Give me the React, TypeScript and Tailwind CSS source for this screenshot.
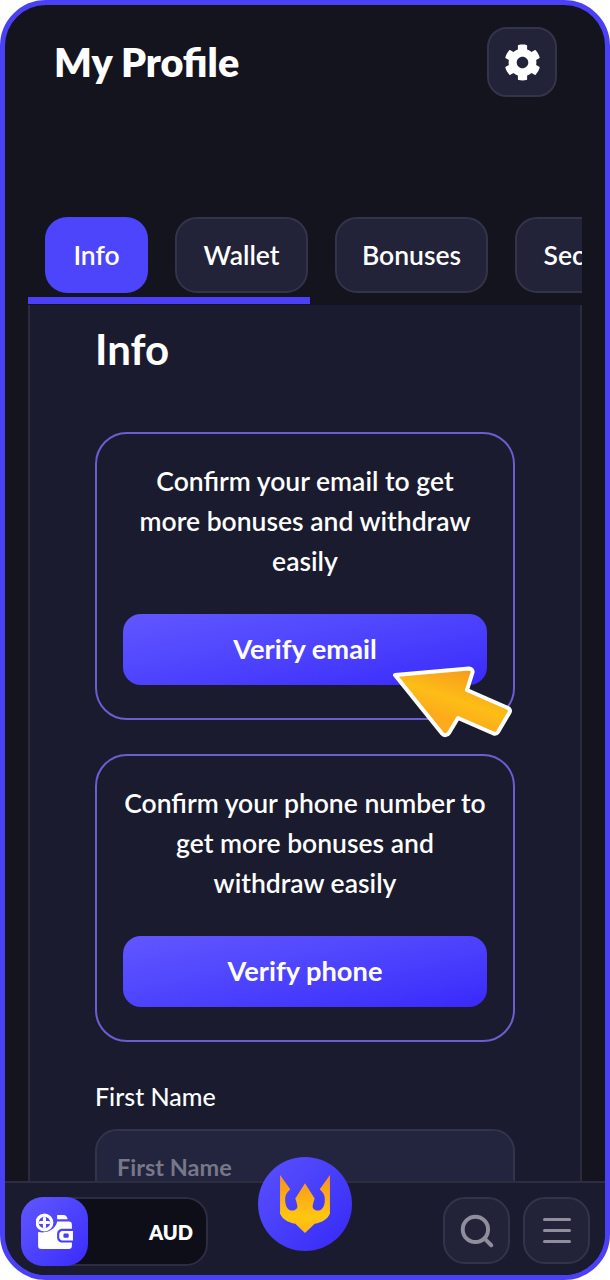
import React from "react";
import { Search } from "lucide-react";
import { FaCog } from "react-icons/fa";

const tabs = [
  { label: "Info", width: "w-[103px]", active: true },
  { label: "Wallet", width: "w-[133px]", active: false },
  { label: "Bonuses", width: "w-[153px]", active: false },
  { label: "Security", width: "w-[153px]", active: false },
];

function VerifyCard({ text, action }: { text: string[]; action: string }) {
  return (
    <div className="rounded-[32px] border-2 border-[#6a5fd0] px-[26px] pt-[27px] pb-[33px]">
      <p className="text-center text-[26.5px] leading-[40px] font-semibold text-white">
        {text.map((line) => (
          <span key={line} className="block whitespace-nowrap">
            {line}
          </span>
        ))}
      </p>
      <button className="mt-[33px] flex h-[71px] w-full items-center justify-center rounded-[18px] bg-gradient-to-br from-[#6256ff] to-[#3a28fb] text-[27.25px] font-bold text-white">
        {action}
      </button>
    </div>
  );
}

function WalletIcon() {
  return (
    <svg width="38" height="38" viewBox="0 0 36 36" fill="none">
      <path d="M20 2h6c2 0 3.500 1.500 4 4H20z" fill="#fff" />
      <path
        d="M20 8h11c2 0 3 1 3 3v4H25c-3 0-5 2-5 5v3c0 3 2 5 5 5h9v3c0 2-1 3-3 3H5c-2 0-3-1-3-3V18c6 1 10 0 14-3 2-2 3.500-4 4-7z"
        fill="#fff"
      />
      <path d="M25 17h10v9H25c-1.500 0-3-1.500-3-3v-3c0-1.500 1.500-3 3-3z" fill="#fff" />
      <rect x="26" y="19.500" width="5" height="4" rx="1" fill="#4a3cff" />
      <circle cx="8" cy="9" r="7" stroke="#fff" strokeWidth="3" fill="#4f42ff" />
      <path d="M8 5v8M4 9h8" stroke="#fff" strokeWidth="3" strokeLinecap="round" />
    </svg>
  );
}

function TridentLogo() {
  return (
    <svg width="50" height="58" viewBox="0 0 49 57">
      <defs>
        <linearGradient id="trident" x1="0.5" y1="0" x2="0.5" y2="1">
          <stop offset="0" stopColor="#fb8f1e" />
          <stop offset="0.72" stopColor="#fec710" />
          <stop offset="1" stopColor="#fdb515" />
        </linearGradient>
      </defs>
      <path
        d="M0 0L10 14C6 18 5 20 5 24C5 31 8 35 12 35C15 35 17 33 17 31C17 29 16 26 15 23L24.500 8L34 23C33 26 32 29 32 31C32 33 34 35 37 35C41 35 44 31 44 24C44 20 43 18 39 14L49 0V38C46 44 42 46 34 48L24.500 57L15 48C7 46 3 44 0 38Z"
        fill="url(#trident)"
      />
    </svg>
  );
}

function PointerArrow() {
  return (
    <svg width="134" height="82" viewBox="0 0 134 82" className="absolute top-[659px] left-[385px]">
      <defs>
        <linearGradient id="pointer" x1="0.75" y1="0" x2="0.35" y2="0.7">
          <stop offset="0" stopColor="#f7951d" />
          <stop offset="0.65" stopColor="#fdbd17" />
          <stop offset="1" stopColor="#fcab1a" />
        </linearGradient>
      </defs>
      <path
        d="M10 16L84 9.500c2.500 0 4 2 3.500 4L82 31l41 18c2 1 2.500 3 1.500 4.500L113 73c-1 1.500-3 2-4.500 1.500L73 59 64 74c-1.500 2.500-5 3-7 .5z"
        fill="url(#pointer)"
        stroke="#fff"
        strokeWidth="4"
        strokeLinejoin="round"
      />
    </svg>
  );
}

export default function App() {
  return (
    <div className="h-[1280px] w-[610px] overflow-hidden bg-white" style={{ fontFamily: "Lato, 'Noto Sans', sans-serif" }}>
      <div className="relative flex h-full flex-col overflow-hidden rounded-[46px] border-[5px] border-[#4c40f7] bg-[#14141f]">
        {/* Header */}
        <div className="flex shrink-0 items-start justify-between pt-[22px] pr-[48px] pl-[49px]">
          <h1 className="mt-[7px] text-[39.5px] leading-[56px] font-extrabold whitespace-nowrap text-white">My Profile</h1>
          <button className="flex h-[70px] w-[70px] items-center justify-center rounded-[20px] border-2 border-[#33344a] bg-[#222339] text-white">
            <FaCog size={37} />
          </button>
        </div>

        {/* Tabs */}
        <div className="mx-[23px] mt-[120px] w-[554px] shrink-0 overflow-hidden">
          <div className="flex gap-[27px] pl-[17px]">
            {tabs.map((tab) => (
              <div
                key={tab.label}
                className={
                  tab.active
                    ? "flex h-[76px] shrink-0 items-center justify-center rounded-[22px] bg-[#4c45fb] pt-[2px] text-[26.5px] font-semibold text-white " + tab.width
                    : "flex h-[76px] shrink-0 items-center justify-center rounded-[22px] border-2 border-[#33344a] bg-[#222339] pt-[2px] text-[26.5px] font-semibold text-white " + tab.width
                }
              >
                {tab.label}
              </div>
            ))}
          </div>
          <div className="mt-[4px] h-[7px] w-[282px] bg-[#4c40f7]" />
        </div>

        {/* Panel */}
        <main className="mx-[23px] mt-[1px] min-h-0 flex-1 overflow-hidden border-x-2 border-[#2a2b3e] bg-[#1a1b2e] pr-[65px] pl-[65px]">
          <h2 className="mt-[18px] text-[42px] leading-[52px] font-bold text-white">Info</h2>
          <div className="mt-[57px] flex flex-col gap-[34px]">
            <VerifyCard text={["Confirm your email to get", "more bonuses and withdraw", "easily"]} action="Verify email" />
            <VerifyCard text={["Confirm your phone number to", "get more bonuses and", "withdraw easily"]} action="Verify phone" />
          </div>
          <div className="mt-[38px] text-[25px] leading-[32px] font-medium text-white">First Name</div>
          <div className="mt-[17px] h-[80px] rounded-[22px] border-2 border-[#33344a] bg-[#23243d] px-[20px] pt-[20px] text-[23.5px] leading-[32px] font-bold text-[#77778a]">
            First Name
          </div>
        </main>

        {/* Bottom bar */}
        <footer className="flex h-[94px] shrink-0 items-start justify-between border-t-2 border-[#2c2d41] bg-[#1a1b2e] pt-[14px] pr-[15px] pl-[16px]">
          <div className="flex h-[69px] w-[187px] items-center justify-between rounded-[22px] border-2 border-[#2c2d41] bg-[#0e0e19] pr-[13px]">
            <div className="-ml-[2px] flex h-[69px] w-[67px] items-center justify-center rounded-[22px] bg-gradient-to-br from-[#6256ff] to-[#3a28fb]">
              <WalletIcon />
            </div>
            <span className="text-[20px] font-extrabold text-white">AUD</span>
          </div>
          <div className="flex gap-[13px]">
            <button className="flex h-[67px] w-[67px] items-center justify-center rounded-[22px] border-2 border-[#33344a] bg-[#222339] text-[#8e8e9c]">
              <Search size={38} strokeWidth={2.5} />
            </button>
            <button className="flex h-[67px] w-[67px] flex-col items-center justify-center gap-[8px] rounded-[22px] border-2 border-[#33344a] bg-[#222339]">
              <span className="h-[3px] w-[28px] rounded-full bg-[#8e8e9c]" />
              <span className="h-[3px] w-[28px] rounded-full bg-[#8e8e9c]" />
              <span className="h-[3px] w-[28px] rounded-full bg-[#8e8e9c]" />
            </button>
          </div>
        </footer>

        {/* Logo sits over the bar edge */}
        <div className="absolute top-[1152px] left-[253px] flex h-[94px] w-[94px] items-center justify-center rounded-full bg-gradient-to-br from-[#5a50ff] to-[#3626f5]">
          <TridentLogo />
        </div>

        <div className="absolute -top-[5px] -left-[5px]">
          <PointerArrow />
        </div>
      </div>
    </div>
  );
}
